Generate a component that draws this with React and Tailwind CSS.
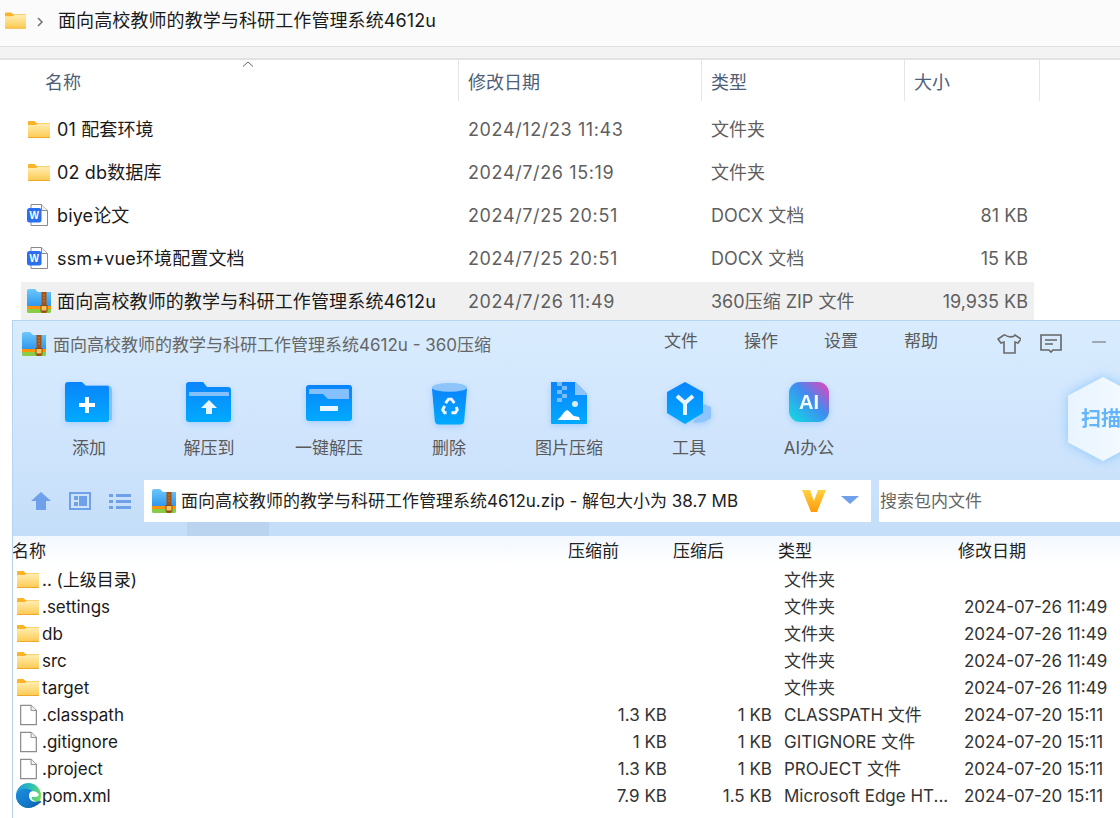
import { Minus } from "lucide-react";

const font = { cjk: "font-['Inter','Noto_Sans_CJK_SC',sans-serif]" };

function Folder({ className = "w-[22px] h-[17px]" }) {
  return <svg viewBox="0 0 22 17" className={className}>
      <defs>
        <linearGradient id="folderFront" x1="0" y1="0" x2="0" y2="1">
          <stop offset="0" stopColor="#ffeeb4" />
          <stop offset="1" stopColor="#fdc94f" />
        </linearGradient>
      </defs>
      <path d="M0 1a1 1 0 0 1 1-1h5.500l2 2H21a1 1 0 0 1 1 1v4H0z" fill="#fbb328" />
      <path d="M0 4h8l2-1.500h11a1 1 0 0 1 1 1V16a1 1 0 0 1-1 1H1a1 1 0 0 1-1-1z" fill="url(#folderFront)" />
      <path d="M0 16h22v.2a.8.8 0 0 1-.8.8H.8a.8.800 0 0 1-.8-.8z" fill="#eea92c" />
    </svg>;
}

function WordDoc() {
  return <svg viewBox="0 0 22 22" className="w-[22px] h-[22px]">
      <path d="M4 .5h10.500l6 6v15H4z" fill="#fff" stroke="#8a8a8a" />
      <path d="M14.500.5v6h6" fill="#f2f2f2" stroke="#8a8a8a" />
      <rect x="0" y="4" width="14.500" height="14.500" rx="2.500" fill="#2a70ee" />
      <text x="7.200" y="14.500" textAnchor="middle" fontSize="10" fontWeight="700" fill="#fff" fontFamily="Liberation Sans">W</text>
    </svg>;
}

function ZipIcon() {
  return <svg viewBox="0 0 24 24" className="w-[24px] h-[24px] shrink-0">
      <defs>
        <linearGradient id="zipBlue" x1="0" y1="0" x2="0" y2="1">
          <stop offset="0" stopColor="#6cc8fb" />
          <stop offset="1" stopColor="#2f97ee" />
        </linearGradient>
      </defs>
      <path d="M0 2a2 2 0 0 1 2-2h6l3 3h13v14H0z" fill="url(#zipBlue)" />
      <rect x="0" y="17" width="24" height="3" fill="#ff9409" />
      <path d="M0 20h24v2.500a1.500 1.500 0 0 1-1.500 1.500h-21A1.500 1.500 0 0 1 0 22.500z" fill="#88cc48" />
      <rect x="14.500" y="3" width="5" height="21" fill="#a55314" />
      <path d="M17 5v9" stroke="#d98f3a" strokeDasharray="1.500 1.500" />
      <rect x="14" y="16.500" width="6" height="5.500" fill="#f6c35a" stroke="#7a3c0c" strokeWidth=".8" />
    </svg>;
}

function BlankFile() {
  return <svg viewBox="0 0 18 22" className="w-[17px] h-[22px]">
      <path d="M.7.7h11l5.600 5.600v15H.7z" fill="#fff" stroke="#8c8c8c" strokeWidth="1.300" />
      <path d="M11.700.7v5.600h5.600" fill="#f0f0f0" stroke="#8c8c8c" />
    </svg>;
}

function EdgeIcon() {
  return <svg viewBox="0 0 24 24" className="w-[25px] h-[25px]">
      <defs>
        <linearGradient id="edgeTop" x1="0" y1=".3" x2="1" y2=".6">
          <stop offset="0" stopColor="#1a9ae0" />
          <stop offset=".55" stopColor="#2fc3b0" />
          <stop offset="1" stopColor="#7ade52" />
        </linearGradient>
        <linearGradient id="edgeBottom" x1="0" y1="0" x2="1" y2="1">
          <stop offset="0" stopColor="#1a8fdc" />
          <stop offset=".6" stopColor="#1277c8" />
          <stop offset="1" stopColor="#0e4f97" />
        </linearGradient>
      </defs>
      <circle cx="12" cy="12" r="12" fill="url(#edgeTop)" />
      <path d="M12 24C5 24 0 18.500 0 12 1 7.500 5.500 5 10 5.500c3 .4 5 1.500 6 2.500-2 0-3.500 1.500-3.500 4 0 4 4 7 9.500 5.500l4.500-1C21 21 16.500 24 12 24z" fill="url(#edgeBottom)" />
      <path d="M12.500 12c0-2.500 1.500-4 3.500-4 2.500-.4 5 .8 6 3.500-1.300 1.800-3.500 2.300-5.500 1.800-1.300-.3-1.800.6-1.300 1.900.7 1.500 2.600 2.400 4.800 2.300-3.800 1.200-7.500-1-7.500-5.500z" fill="#fff" />
    </svg>;
}

const toolDefs = <defs>
    <linearGradient id="toolBlue" x1="0" y1="0" x2="0" y2="1">
      <stop offset="0" stopColor="#0a84fb" />
      <stop offset="1" stopColor="#00aaff" />
    </linearGradient>
    <linearGradient id="aiBg" x1="0" y1="1" x2="1" y2="0">
      <stop offset="0" stopColor="#0fe0e0" />
      <stop offset=".55" stopColor="#3f8cf0" />
      <stop offset="1" stopColor="#f03fb8" />
    </linearGradient>
  </defs>;

function AddIcon() {
  return <svg viewBox="0 0 48 40" className="w-[48px] h-[40px]">
      {toolDefs}
      <path d="M19 3h23a5 5 0 0 1 5 5v30H40z" fill="#85c0fc" />
      <path d="M0 3a3 3 0 0 1 3-3h14l4 4h21a2 2 0 0 1 2 2v32a2 2 0 0 1-2 2H3a3 3 0 0 1-3-3z" fill="url(#toolBlue)" />
      <path d="M20 15h4v6h6v4h-6v6h-4v-6h-6v-4h6z" fill="#fff" />
    </svg>;
}

function ExtractIcon() {
  return <svg viewBox="0 0 46 40" className="w-[46px] h-[40px]">
      <path d="M0 3a3 3 0 0 1 3-3h14l4 5h21a3 3 0 0 1 3 3v29a3 3 0 0 1-3 3H3a3 3 0 0 1-3-3z" fill="url(#toolBlue)" />
      <path d="M3 14V11a1 1 0 0 1 1-1h38a1 1 0 0 1 1 1v3z" fill="#85c0fc" />
      <path d="M23 18l8 8h-5v6h-6v-6h-5z" fill="#eaf6ff" />
    </svg>;
}

function OneKeyIcon() {
  return <svg viewBox="0 0 46 36" className="w-[46px] h-[36px] mt-[3px]">
      <rect width="46" height="36" rx="3" fill="url(#toolBlue)" />
      <path d="M3 5a1 1 0 0 1 1-1h38a1 1 0 0 1 1 1v9H22l-5-5H3z" fill="#85c0fc" />
      <rect x="14" y="21" width="18" height="5" fill="#eaf6ff" />
    </svg>;
}

function TrashIcon() {
  return <svg viewBox="0 0 38 44" className="w-[37px] h-[44px]">
      <path d="M1 6h36l-3 34a4 4 0 0 1-4 3H8a4 4 0 0 1-4-3z" fill="url(#toolBlue)" />
      <ellipse cx="19" cy="5" rx="18" ry="4.500" fill="#8dc5fb" />
      <g fill="none" stroke="#f1f8ff" strokeWidth="3">
        <path d="M15 21l3-4h3l3 4" />
        <path d="M26 25l1 3-2 3h-4" />
        <path d="M16 31h-2l-2-3 2-4" />
      </g>
    </svg>;
}

function ImageZipIcon() {
  return <svg viewBox="0 0 36 42" className="w-[36px] h-[42px]">
      <path d="M0 0h24l12 12v29a1 1 0 0 1-1 1H1a1 1 0 0 1-1-1z" fill="url(#toolBlue)" />
      <path d="M24 0l12 12v1H24z" fill="#8cc4fb" />
      <path d="M6 0h5v4H6zM11 4h5v4h-5zM6 8h5v4H6zM11 12h5v4h-5zM6 16h5v4H6z" fill="#7dbcfb" />
      <circle cx="24" cy="22" r="3" fill="#d6ecff" />
      <path d="M7 37c3-1 5-7 9-9 4 2 5 5 7 6l5 1 1 3H7z" fill="#fff" />
    </svg>;
}

function ToolsIcon() {
  return <svg viewBox="0 0 46 42" className="w-[46px] h-[42px]">
      <path d="M38 22l7 3v11l-7 4-11 1z" fill="#8cc4fb" />
      <path d="M19 0l18 10v21L19 42 1 31V10z" fill="url(#toolBlue)" />
      <path d="M11 14l8 7 8-7M19 21v12" fill="none" stroke="#eaf6ff" strokeWidth="4" />
    </svg>;
}

function AiIcon() {
  return <svg viewBox="0 0 40 40" className="w-[40px] h-[40px]">
      <rect width="40" height="40" rx="11" fill="url(#aiBg)" />
      <text x="20" y="27" textAnchor="middle" fontSize="20" fontWeight="700" fill="#f4fbff" fontFamily="Liberation Sans">AI</text>
    </svg>;
}

const explorerRows = [
  { name: "01 配套环境", date: "2024/12/23 11:43", type: "文件夹", icon: "folder" },
  { name: "02 db数据库", date: "2024/7/26 15:19", type: "文件夹", icon: "folder" },
  { name: "biye论文", date: "2024/7/25 20:51", type: "DOCX 文档", size: "81 KB", icon: "word" },
  { name: "ssm+vue环境配置文档", date: "2024/7/25 20:51", type: "DOCX 文档", size: "15 KB", icon: "word" },
  { name: "面向高校教师的教学与科研工作管理系统4612u", date: "2024/7/26 11:49", type: "360压缩 ZIP 文件", size: "19,935 KB", icon: "zip", selected: true }
];

const tools = [
  { label: "添加", Icon: AddIcon },
  { label: "解压到", Icon: ExtractIcon },
  { label: "一键解压", Icon: OneKeyIcon },
  { label: "删除", Icon: TrashIcon },
  { label: "图片压缩", Icon: ImageZipIcon },
  { label: "工具", Icon: ToolsIcon },
  { label: "AI办公", Icon: AiIcon }
];

const archiveRows = [
  { name: ".. (上级目录)", type: "文件夹", icon: "folder" },
  { name: ".settings", type: "文件夹", date: "2024-07-26 11:49", icon: "folder" },
  { name: "db", type: "文件夹", date: "2024-07-26 11:49", icon: "folder" },
  { name: "src", type: "文件夹", date: "2024-07-26 11:49", icon: "folder" },
  { name: "target", type: "文件夹", date: "2024-07-26 11:49", icon: "folder" },
  { name: ".classpath", size: "1.3 KB", packed: "1 KB", type: "CLASSPATH 文件", date: "2024-07-20 15:11", icon: "file" },
  { name: ".gitignore", size: "1 KB", packed: "1 KB", type: "GITIGNORE 文件", date: "2024-07-20 15:11", icon: "file" },
  { name: ".project", size: "1.3 KB", packed: "1 KB", type: "PROJECT 文件", date: "2024-07-20 15:11", icon: "file" },
  { name: "pom.xml", size: "7.9 KB", packed: "1.5 KB", type: "Microsoft Edge HT...", date: "2024-07-20 15:11", icon: "edge" }
];

function Explorer() {
  return <div className="h-[320px] bg-white">
      <div className="h-[47px] bg-[#fbfbfb] border-b border-[#e0e0e0] flex items-center text-[18px] text-[#1a1a1a] pb-[5px]">
        <div className="ml-[5px] w-[23px]"><Folder className="w-[21px] h-[17px]" /></div>
        <svg viewBox="0 0 8 12" className="ml-[8px] mt-[3px] w-[8px] h-[12px]">
          <path d="M2 2l4 4-4 4" fill="none" stroke="#777" strokeWidth="1.600" />
        </svg>
        <span className="ml-[14px] tracking-[0.1px]">面向高校教师的教学与科研工作管理系统4612u</span>
      </div>
      <div className="h-[13px] bg-[#f3f3f3] border-b-2 border-[#e2e2e2]" />
      <div className="h-[41px] flex text-[18px] text-[#4d6078] relative">
        <svg viewBox="0 0 12 6" className="absolute left-[242px] top-[1px] w-[12px] h-[6px]">
          <path d="M1 5.500L6 1l5 4.500" fill="none" stroke="#666" />
        </svg>
        <div className="w-[459px] pl-[45px] pt-[9px] border-r border-[#e5e5e5]">名称</div>
        <div className="w-[243px] pl-[9px] pt-[9px] border-r border-[#e5e5e5]">修改日期</div>
        <div className="w-[203px] pl-[9px] pt-[9px] border-r border-[#e5e5e5]">类型</div>
        <div className="w-[135px] pl-[9px] pt-[9px] border-r border-[#e5e5e5]">大小</div>
      </div>
      <div className="ml-[21px] w-[1013px] mt-[9px] flex flex-col gap-[5px]">
        {explorerRows.map((row) => <div key={row.name} className={`h-[38px] flex items-center text-[18px] ${row.selected ? "bg-[#f0f0f0]" : ""}`}>
            <div className="w-[36px] pl-[6px] flex items-center">
              {row.icon === "folder" && <div className="pl-[1px]"><Folder /></div>}
              {row.icon === "word" && <WordDoc />}
              {row.icon === "zip" && <ZipIcon />}
            </div>
            <div className="w-[411px] text-[#1a1a1a] whitespace-nowrap tracking-[0.14px]">{row.name}</div>
            <div className="w-[243px] text-[#5f5f5f] whitespace-nowrap tracking-[0.62px]">{row.date}</div>
            <div className="w-[200px] text-[#5f5f5f] whitespace-nowrap">{row.type}</div>
            <div className="w-[117px] text-right text-[#5f5f5f] whitespace-nowrap">{row.size}</div>
          </div>)}
      </div>
    </div>;
}

function ArchiveWindow() {
  return <div className="ml-[12px] h-[498px] border-l border-t border-[#b5d3f2] overflow-hidden flex flex-col text-[17px]">
      <div className="h-[147px] bg-gradient-to-b from-[#d9ecfe] to-[#cde3fc]">
        <div className="h-[46px] flex items-center text-[#666]">
          <div className="pl-[9px]"><ZipIcon /></div>
          <span className="ml-[7px] mt-[3px] w-[611px] whitespace-nowrap">面向高校教师的教学与科研工作管理系统4612u - 360压缩</span>
          <div className="flex gap-[46px] -mt-[4px] text-[#5a5a5a]">
            <span>文件</span>
            <span>操作</span>
            <span>设置</span>
            <span>帮助</span>
          </div>
          <svg viewBox="0 0 24 20" className="ml-[59px] w-[24px] h-[20px]">
            <path d="M7 1L1 5l3 4 3-1v11h11V8l3 1 3-4-6-4c-1 2.500-7 2.500-10 0z" fill="none" stroke="#6a6a6a" strokeWidth="1.600" />
          </svg>
          <svg viewBox="0 0 22 20" className="ml-[19px] w-[22px] h-[20px]">
            <path d="M1 1h20v15h-8l-2 2-2-2H1z" fill="none" stroke="#666" strokeWidth="1.600" />
            <path d="M5 6h12M5 10h8" stroke="#666" strokeWidth="1.600" />
          </svg>
          <Minus className="ml-[26px] w-[22px] h-[22px] text-[#666] -translate-y-[2px]" strokeWidth={1.300} />
        </div>
        <div className="flex pl-[16px] pt-[15px]">
          {tools.map(({ label, Icon }) => <div key={label} className="w-[120px] shrink-0 flex flex-col items-center">
              <div className="h-[44px] flex items-start justify-center drop-shadow-[0_2px_3px_rgba(60,150,250,0.3)]"><Icon /></div>
              <span className="mt-[10px] text-[#5a5a5a] whitespace-nowrap">{label}</span>
            </div>)}
          <div className="ml-[199px] -mt-[5px] shrink-0 drop-shadow-[0_0_6px_rgba(120,190,250,0.8)]">
            <div className="w-[70px] h-[84px] bg-gradient-to-r from-[#e8f4ff] to-[#f6fbff] [clip-path:polygon(50%_0,100%_22%,100%_78%,50%_100%,0_78%,0_22%)] flex items-center pl-[13px] text-[20px] font-bold text-[#62b4fb] whitespace-nowrap">扫描</div>
          </div>
        </div>
      </div>
      <div className="h-[68px] bg-gradient-to-b from-[#cde3fc] to-[#c3ddf8] pt-[12px]">
        <div className="flex items-center h-[42px]">
          <svg viewBox="0 0 20 18" className="ml-[18px] w-[20px] h-[18px]">
            <path d="M10 0l10 9h-5v9H5V9H0z" fill="#6ea1ea" />
          </svg>
          <svg viewBox="0 0 22 18" className="ml-[18px] w-[22px] h-[18px]">
            <rect x="1" y="1" width="20" height="16" fill="#cfe3fa" stroke="#6ea1ea" strokeWidth="2" />
            <path d="M5 4h4v4H5zM5 10h4v4H5zM10 4h8v10h-8z" fill="#6ea1ea" />
          </svg>
          <svg viewBox="0 0 22 16" className="ml-[18px] w-[22px] h-[16px]">
            <path d="M0 1h4v3H0zM7 1h15v3H7zM0 7h4v3H0zM7 7h15v3H7zM0 13h4v3H0zM7 13h15v3H7z" fill="#6ea1ea" />
          </svg>
          <div className="ml-[13px] w-[727px] h-[42px] bg-white flex items-center text-[#222]">
            <div className="ml-[8px]"><ZipIcon /></div>
            <span className="ml-[5px] translate-y-px whitespace-nowrap">面向高校教师的教学与科研工作管理系统4612u.zip - 解包大小为 38.7 MB</span>
            <svg viewBox="0 0 24 22" className="ml-auto w-[24px] h-[22px]">
              <defs>
                <linearGradient id="vMark" x1="0" y1="0" x2="0" y2="1">
                  <stop offset="0" stopColor="#ffd23f" />
                  <stop offset="1" stopColor="#ff9a0a" />
                </linearGradient>
              </defs>
              <path d="M0 0h8l4 11 4-11h8l-9 22H9z" fill="url(#vMark)" />
            </svg>
            <svg viewBox="0 0 18 8" className="ml-[15px] mr-[12px] w-[18px] h-[8px] -mt-[2px]">
              <path d="M0 0h18l-9 8z" fill="#6ea1ea" />
            </svg>
          </div>
          <div className="ml-[8px] flex-1 h-[42px] bg-white flex items-center pl-[1px] text-[#666]">
            <span className="translate-y-px">搜索包内文件</span>
          </div>
        </div>
        <div className="ml-[174px] w-[82px] h-[14px] bg-[#bad4ef]" />
      </div>
      <div className="h-[30px] bg-gradient-to-b from-[#f3f8ff] to-white grid grid-cols-[555px_105px_105px_180px_1fr] items-center text-[#222] whitespace-nowrap">
        <span className="-ml-[1px] translate-y-px">名称</span>
        <span className="translate-y-px">压缩前</span>
        <span className="translate-y-px">压缩后</span>
        <span className="translate-y-px">类型</span>
        <span className="translate-y-px">修改日期</span>
      </div>
      <div className="flex-1 bg-white flex flex-col">
        {archiveRows.map((row) => <div key={row.name} className="h-[27px] shrink-0 grid grid-cols-[554px_100px_105px_192px_1fr] items-center text-[#1a1a1a] whitespace-nowrap">
            <div className="flex items-center">
              <div className="w-[29px] flex items-center justify-center">
                {row.icon === "folder" && <div className="pl-[1px]"><Folder /></div>}
                {row.icon === "file" && <div className="pl-[1px]"><BlankFile /></div>}
                {row.icon === "edge" && <div className="pl-[2px]"><EdgeIcon /></div>}
              </div>
              <span className="translate-y-px">{row.name}</span>
            </div>
            <span className="translate-y-px text-right text-[#333]">{row.size}</span>
            <span className="translate-y-px text-right text-[#333]">{row.packed}</span>
            <span className="translate-y-px pl-[12px] text-[#333]">{row.type}</span>
            <span className="translate-y-px text-[#333]">{row.date}</span>
          </div>)}
      </div>
    </div>;
}

export default function App() {
  return <div className={`w-[1120px] h-[818px] overflow-hidden bg-white ${font.cjk}`}>
      <Explorer />
      <ArchiveWindow />
    </div>;
}
